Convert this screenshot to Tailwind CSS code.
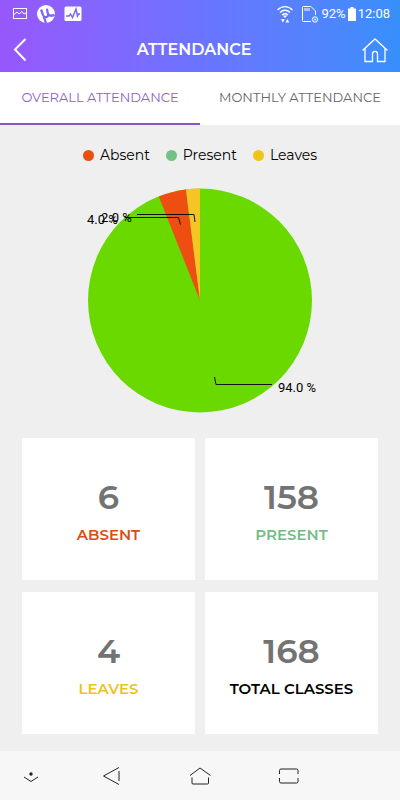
<!DOCTYPE html>
<html lang="en">
<head>
    <meta charset="UTF-8">
    <meta name="viewport" content="width=device-width, initial-scale=1.0">
    <title>Attendance</title>
    <script src="https://cdn.jsdelivr.net/npm/@tailwindcss/browser@4"></script>
</head>
<body class="min-h-screen flex flex-col bg-[#efefef] font-[Montserrat,Inter,sans-serif]">
    <header class="bg-linear-to-r from-[#9757fb] via-[#6a73ff] to-[#368ffb] text-white">
        <!-- Status bar -->
        <div class="h-7 pl-3 pr-[10px] flex items-center justify-between font-[Roboto,sans-serif] text-[13px]">
            <div class="flex items-center gap-[9px]">
                <svg class="w-4 h-4" viewBox="0 0 16 16" fill="none" stroke="currentColor">
                    <rect x="1.5" y="2.5" width="13" height="10"/>
                    <path d="M2 8.5l3-2.5 2 2 3-2.5 2 2.5 2-1"/>
                </svg>
                <svg class="w-[18px] h-[18px]" viewBox="0 0 20 20">
                    <circle cx="10" cy="10" r="10" fill="#fff"/>
                    <path d="M4.5 5l2.3 6.5c1.2 3 6 2.300 5.500-1L11 4M12.500 10c1.200 2.500 4 2.300 7 1M7.500 13L10 20" fill="none" stroke="#7d66fb" stroke-width="2.500"/>
                </svg>
                <svg class="w-[18px] h-4" viewBox="0 0 18 16">
                    <rect x="0.5" y="0.5" width="17" height="14.5" rx="1.5" fill="#fff"/>
                    <path d="M2 10h3l1.5-2 2 3.5L12 3l1.5 7 1-2H16" fill="none" stroke="#7d66fb" stroke-width="1.5"/>
                </svg>
            </div>
            <div class="flex items-center">
                <svg class="w-4 h-[18px] mr-2" viewBox="0 0 16 18" fill="none" stroke="currentColor" stroke-width="1.3">
                    <path d="M.5 5c4.5-4.5 10.5-4.5 15 0M3 7.5c3-3 7-3 10 0M5 10c2-1.7 4-1.7 6 0"/>
                    <path d="M8 13l-2.2-2.5h4.4zM4 14h3.8L5.9 17.5zM8.5 17.5h3.8l-1.9-3.5z" fill="currentColor" stroke="none"/>
                </svg>
                <svg class="w-[18px] h-[18px] mr-[2px]" viewBox="0 0 18 18" fill="none" stroke="currentColor">
                    <path d="M10 16.5H2.5a1 1 0 0 1-1-1v-13a1 1 0 0 1 1-1H10L14.5 6v4M4 3v3M6 3v3M8 3v3"/>
                    <circle cx="14" cy="14.5" r="2.7"/>
                    <path d="M13 13.5l2 2m0-2l-2 2"/>
                </svg>
                <span>92%</span>
                <svg class="w-2 h-[14px] mx-[2px]" viewBox="0 0 8 14" fill="currentColor">
                    <path d="M2.5 0h3v1.5H8V14H0V1.5h2.5z"/>
                </svg>
                <span>12:08</span>
            </div>
        </div>
        <!-- Title bar -->
        <div class="h-11 px-3 flex items-center justify-between">
            <button type="button" aria-label="Back" class="cursor-pointer">
                <svg class="w-4 h-7" viewBox="0 0 16 28" fill="none" stroke="currentColor" stroke-width="2">
                    <path d="M13.5 3L3 13.5 13.5 24.5"/>
                </svg>
            </button>
            <h1 class="text-base font-semibold">ATTENDANCE</h1>
            <a href="#" aria-label="Home">
                <svg class="w-7 h-7" viewBox="0 0 28 28" fill="none" stroke="currentColor" stroke-width="1.3">
                    <path d="M2.5 14.5L15 3l12.5 11.5M5 12v13.5h7.5V18c0-3.5 5-3.5 5 0v7.5H25V12"/>
                </svg>
            </a>
        </div>
    </header>

    <nav class="grid grid-cols-2 bg-white text-[13px] text-[#666]">
        <button type="button" class="h-[53px] border-b-2 border-[#8a57be] text-[#8f5fcb] whitespace-nowrap cursor-pointer">OVERALL ATTENDANCE</button>
        <button type="button" class="h-[53px] border-b-2 border-white whitespace-nowrap cursor-pointer">MONTHLY ATTENDANCE</button>
    </nav>

    <main class="flex-1 pb-4">
        <ul class="pt-5 flex justify-center gap-4 text-sm leading-5 text-black">
            <li class="flex items-center gap-[6px]"><span class="w-[11px] h-[11px] rounded-full bg-[#e8500f]"></span>Absent</li>
            <li class="flex items-center gap-[6px]"><span class="w-[11px] h-[11px] rounded-full bg-[#72c185]"></span>Present</li>
            <li class="flex items-center gap-[6px]"><span class="w-[11px] h-[11px] rounded-full bg-[#f0c41b]"></span>Leaves</li>
        </ul>

        <!-- Pie chart: 94% present, 4% absent, 2% leaves -->
        <svg class="block w-full max-w-[400px] mx-auto mt-5 font-[Roboto,sans-serif] text-[13px]" viewBox="0 0 400 232" role="img" aria-label="Overall attendance">
            <circle cx="200" cy="115.5" r="112" fill="#6ad900"/>
            <path d="M200 115.5L158.8 11.4A112 112 0 0 1 186 4.4z" fill="#ee4e12"/>
            <path d="M200 115.5L186 4.4A112 112 0 0 1 200 3.5z" fill="#f4c524"/>
            <g fill="none" stroke="#111">
                <path d="M180.5 39.5l-2-7h-54"/>
                <path d="M195 37l-1-7.5h-57"/>
                <path d="M214.5 192l1.5 7.5h56"/>
            </g>
            <text x="87" y="39">4.0 %</text>
            <text x="101" y="37">2.0 %</text>
            <text x="278" y="207">94.0 %</text>
        </svg>

        <section class="mt-[21px] px-[22px] grid grid-cols-2 gap-x-[10px] gap-y-3 text-center">
            <div class="h-[142px] pt-1 bg-white flex flex-col items-center justify-center gap-2">
                <p class="text-[34px] leading-10 font-semibold text-[#737373]">6</p>
                <p class="text-[15px] leading-5 font-semibold text-[#dc4c10]">ABSENT</p>
            </div>
            <div class="h-[142px] pt-1 bg-white flex flex-col items-center justify-center gap-2">
                <p class="text-[34px] leading-10 font-semibold text-[#737373]">158</p>
                <p class="text-[15px] leading-5 font-semibold text-[#72bd83]">PRESENT</p>
            </div>
            <div class="h-[142px] pt-1 bg-white flex flex-col items-center justify-center gap-2">
                <p class="text-[34px] leading-10 font-semibold text-[#737373]">4</p>
                <p class="text-[15px] leading-5 font-semibold text-[#ecc421]">LEAVES</p>
            </div>
            <div class="h-[142px] pt-1 bg-white flex flex-col items-center justify-center gap-2">
                <p class="text-[34px] leading-10 font-semibold text-[#737373]">168</p>
                <p class="text-[15px] leading-5 font-semibold text-black">TOTAL CLASSES</p>
            </div>
        </section>
    </main>

    <!-- Android navigation bar -->
    <footer class="h-[49px] px-4 bg-[#f7f7f7] text-[#222]">
        <div class="h-full max-w-[286px] flex items-center justify-between">
            <button type="button" aria-label="Hide navigation bar" class="cursor-pointer">
                <svg class="w-[22px] h-7" viewBox="0 0 22 28" fill="none" stroke="currentColor">
                    <circle cx="15" cy="12" r="1.7" fill="currentColor" stroke="none"/>
                    <path d="M8 15l7 4.5 7-4.5"/>
                </svg>
            </button>
            <button type="button" aria-label="Back" class="cursor-pointer">
                <svg class="w-7 h-7" viewBox="0 0 28 28" fill="none" stroke="currentColor">
                    <path d="M21 5.5L5.500 14 21 22.5M21 9v10"/>
                </svg>
            </button>
            <button type="button" aria-label="Home" class="cursor-pointer">
                <svg class="w-7 h-7" viewBox="0 0 28 28" fill="none" stroke="currentColor">
                    <path d="M4 13.5L14 6l10.5 7.5M6 15.5v5.5q0 1 1 1h14.5q1 0 1-1v-5.5"/>
                </svg>
            </button>
            <button type="button" aria-label="Recent apps" class="cursor-pointer">
                <svg class="w-7 h-7" viewBox="0 0 28 28" fill="none" stroke="currentColor">
                    <path d="M5.5 12V8.5q0-1.5 1.5-1.5h15.5q1.5 0 1.5 1.5V12M5.5 16v3.5q0 1.5 1.5 1.5h15.5q1.5 0 1.5-1.5V16"/>
                </svg>
            </button>
        </div>
    </footer>
</body>
</html>
